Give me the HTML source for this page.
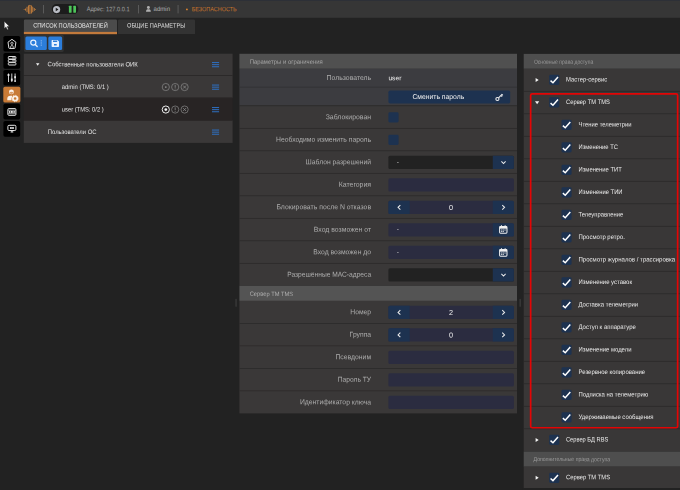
<!DOCTYPE html><html><head><meta charset="utf-8"><title>ui</title><style>
html,body{margin:0;padding:0;}
body{width:680px;height:490px;overflow:hidden;background:#222222;font-family:"Liberation Sans",sans-serif;position:relative;color:#ddd;}
#w{position:absolute;left:-6px;top:-6px;width:692px;height:502px;overflow:hidden;filter:blur(0.3px);}
#c{position:absolute;left:6px;top:6px;width:680px;height:490px;}
.a{position:absolute;}
.t{position:absolute;left:0;top:0;white-space:nowrap;line-height:1;transform-origin:0 0;}
.tr{position:absolute;white-space:nowrap;line-height:1;text-align:right;transform-origin:right center;}
.tc{position:absolute;white-space:nowrap;line-height:1;text-align:center;transform-origin:center center;}
svg{position:absolute;overflow:visible;}
</style></head><body><div id="w"><div id="c">
<svg style="left:0;top:0" width="680" height="490"><rect x="-6.00" y="-6.00" width="692.00" height="23.80" fill="#363636"/><rect x="-6.00" y="-6.00" width="692.00" height="6.80" fill="#2c3038"/><rect x="23.70" y="8.90" width="0.85" height="1.00" rx="0.42" fill="#d5873c"/><rect x="25.20" y="8.25" width="0.80" height="2.40" rx="0.40" fill="#e08c3c"/><rect x="26.64" y="6.55" width="0.80" height="5.80" rx="0.40" fill="#e08c3c"/><rect x="28.08" y="5.10" width="0.80" height="8.70" rx="0.40" fill="#e08c3c"/><rect x="29.52" y="4.85" width="0.80" height="9.20" rx="0.40" fill="#e08c3c"/><rect x="30.96" y="5.30" width="0.80" height="8.30" rx="0.40" fill="#e08c3c"/><rect x="32.40" y="6.55" width="0.80" height="5.80" rx="0.40" fill="#e08c3c"/><rect x="33.84" y="8.00" width="0.80" height="2.90" rx="0.40" fill="#e08c3c"/><rect x="35.20" y="8.90" width="0.85" height="1.00" rx="0.42" fill="#d5873c"/><rect x="43.20" y="5.00" width="0.70" height="8.40" fill="#6a6a6a"/><rect x="51.70" y="4.10" width="26.70" height="10.00" rx="5.00" fill="#1c1c1c"/></svg>
<svg style="left:53.2px;top:5.8px" width="7.2" height="7.2" viewBox="0 0 10 10"><circle cx="5" cy="5" r="5" fill="#b9bcc4"/><path d="M3.8 2.6 L7.6 5 L3.8 7.4 Z" fill="#1b1b1b"/></svg>
<svg style="left:0;top:0" width="680" height="490"><rect x="68.90" y="5.80" width="2.70" height="6.90" rx="0.40" fill="#4dc45a"/><rect x="73.30" y="5.80" width="2.70" height="6.90" rx="0.40" fill="#4dc45a"/></svg>
<div class="t" style="font-size:6.39px;color:#a2a2a2;transform:matrix(0.8886,0.001,0,1,86.70,6.11);">Адрес: 127.0.0.1</div>
<svg style="left:0;top:0" width="680" height="490"><rect x="138.00" y="5.00" width="0.70" height="8.40" fill="#6a6a6a"/></svg>
<svg style="left:145.6px;top:6.2px" width="4.8" height="5.8" viewBox="0 0 10 12"><circle cx="5" cy="3.2" r="3" fill="#b0b0b0"/><path d="M0 12 C0 7.5 2 6.5 5 6.5 C8 6.5 10 7.5 10 12 Z" fill="#b0b0b0"/></svg>
<div class="t" style="font-size:6.39px;color:#b0b0b0;transform:matrix(0.9554,0.001,0,1,153.50,6.11);">admin</div>
<svg style="left:0;top:0" width="680" height="490"><rect x="177.70" y="5.00" width="0.70" height="8.40" fill="#6a6a6a"/></svg>
<svg style="left:0;top:0" width="680" height="490"><circle cx="186.9" cy="9.4" r="0.95" fill="#d9822f"/></svg>
<div class="t" style="font-size:6.28px;color:#c9742c;transform:matrix(0.8724,0.001,0,1,191.70,6.16);">БЕЗОПАСНОСТЬ</div>
<svg style="left:4.2px;top:21.2px" width="6" height="9.5" viewBox="0 0 12 19"><path d="M0.5 0.5 L0.5 15 L4 11.8 L6.4 17.6 L8.8 16.6 L6.4 11 L11 11 Z" fill="#f2f2f2" stroke="#111" stroke-width="0.8"/></svg>
<svg style="left:0;top:0" width="680" height="490"><rect x="3.40" y="35.90" width="16.80" height="15.65" rx="1.70" fill="#000000"/><rect x="3.40" y="53.00" width="16.80" height="15.65" rx="1.70" fill="#000000"/><rect x="3.40" y="69.90" width="16.80" height="15.65" rx="1.70" fill="#000000"/><rect x="3.30" y="86.70" width="17.10" height="15.90" rx="1.70" fill="#c87a36"/><rect x="3.40" y="103.80" width="16.80" height="15.65" rx="1.70" fill="#000000"/><rect x="3.40" y="121.00" width="16.80" height="15.65" rx="1.70" fill="#000000"/></svg>
<svg style="left:0;top:0" width="680" height="490"><path d="M11.95 39.3 L15.9 42.2 L15.0 48.0 Q14.9 48.5 14.4 48.5 L9.5 48.5 Q9.0 48.5 8.9 48.0 L8.0 42.2 Z" fill="none" stroke="#e6e6e6" stroke-width="0.95" stroke-linejoin="round"/><circle cx="11.95" cy="43.3" r="1.15" fill="none" stroke="#e6e6e6" stroke-width="0.8"/><path d="M10.7 48.2 V46.4 Q10.7 45.6 11.95 45.6 Q13.2 45.6 13.2 46.4 V48.2" fill="none" stroke="#e6e6e6" stroke-width="0.8"/></svg>
<svg style="left:0;top:0" width="680" height="490"><g fill="none" stroke="#e6e6e6" stroke-width="0.95"><rect x="8.3" y="56.5" width="7.6" height="2.5" rx="0.7"/><rect x="8.3" y="59.5" width="7.6" height="2.6" rx="0.7"/><rect x="8.3" y="62.6" width="7.6" height="2.4" rx="0.7"/></g><path d="M12.2 57.8 H15.4 M12.2 60.8 H15.4" stroke="#e6e6e6" stroke-width="1.0" opacity="0.75"/></svg>
<svg style="left:0;top:0" width="680" height="490"><path d="M8.5 73.5 V82 M11.8 73.5 V82 M15.1 73.5 V82" stroke="#e6e6e6" stroke-width="0.9" fill="none"/><rect x="7.6" y="74.0" width="1.8" height="2.0" fill="#e6e6e6"/><rect x="10.9" y="78.6" width="1.8" height="2.3" fill="#e6e6e6"/><rect x="14.2" y="76.2" width="1.8" height="2.0" fill="#e6e6e6"/><rect x="14.4" y="80.3" width="1.4" height="1.5" fill="#e6e6e6"/></svg>
<svg style="left:0;top:0" width="680" height="490"><circle cx="11.4" cy="91.9" r="2.45" fill="#fbf1e8"/><path d="M9.5 92.3 Q11.4 91.2 13.3 92.3 Q13.1 94.1 11.4 94.1 Q9.7 94.1 9.5 92.3 Z" fill="#d89a66"/><path d="M7.3 100.2 V98.6 Q7.3 95.9 10.4 95.7 L12.2 95.7 Q12.0 97.2 11.6 98.0 Q11.3 99.0 11.5 100.2 Z" fill="#fbf1e8"/><circle cx="15.1" cy="98.5" r="2.2" fill="none" stroke="#fbf1e8" stroke-width="1.7"/><circle cx="15.1" cy="98.5" r="3.2" fill="none" stroke="#fbf1e8" stroke-width="0.8" stroke-dasharray="1.1 1.4"/></svg>
<svg style="left:0;top:0" width="680" height="490"><rect x="7.9" y="108.6" width="8.0" height="6.7" rx="0.9" fill="none" stroke="#e6e6e6" stroke-width="1.0"/><path d="M8.3 110.2 H15.5 M8.3 113.7 H15.5" stroke="#e6e6e6" stroke-width="0.7"/><rect x="9.0" y="111.0" width="5.8" height="1.9" fill="#e6e6e6"/><rect x="9.9" y="111.45" width="1.1" height="1.0" fill="#000"/><rect x="12.6" y="111.45" width="1.1" height="1.0" fill="#000"/></svg>
<svg style="left:0;top:0" width="680" height="490"><rect x="7.9" y="125.3" width="8.0" height="5.2" rx="1.1" fill="none" stroke="#e6e6e6" stroke-width="1.0"/><rect x="10.1" y="127.0" width="3.7" height="2.0" rx="0.3" fill="#e6e6e6"/><rect x="11.5" y="127.5" width="0.9" height="1.0" fill="#000"/><path d="M10.6 132.0 H13.3 M11.95 130.6 V132" stroke="#e6e6e6" stroke-width="1.0"/></svg>
<svg style="left:0;top:0" width="680" height="490"><path d="M25.10 19.50 H115.80 A1.20 1.20 0 0 1 117.00 20.70 V34.10 A0.00 0.00 0 0 1 117.00 34.10 H23.90 A0.00 0.00 0 0 1 23.90 34.10 V20.70 A1.20 1.20 0 0 1 25.10 19.50 Z" fill="#4b4b4b"/><rect x="23.90" y="31.90" width="93.10" height="2.30" fill="#c27a3c"/></svg>
<div class="t" style="font-size:6.39px;color:#e4e4e4;transform:matrix(0.8854,0.001,0,1,33.20,22.61);">СПИСОК ПОЛЬЗОВАТЕЛЕЙ</div>
<svg style="left:0;top:0" width="680" height="490"><path d="M119.20 19.50 H193.80 A1.20 1.20 0 0 1 195.00 20.70 V34.10 A0.00 0.00 0 0 1 195.00 34.10 H118.00 A0.00 0.00 0 0 1 118.00 34.10 V20.70 A1.20 1.20 0 0 1 119.20 19.50 Z" fill="#333333"/></svg>
<div class="t" style="font-size:6.39px;color:#dcdcdc;transform:matrix(0.8833,0.001,0,1,127.00,22.61);">ОБЩИЕ ПАРАМЕТРЫ</div>
<svg style="left:0;top:0" width="680" height="490"><rect x="24.00" y="34.80" width="39.70" height="17.30" rx="1.50" fill="#313131"/><rect x="25.40" y="36.60" width="21.40" height="13.40" rx="1.50" fill="#2b7ddb"/><rect x="48.30" y="36.60" width="13.80" height="13.40" rx="1.50" fill="#2b7ddb"/></svg>
<svg style="left:0;top:0" width="680" height="490"><circle cx="33.3" cy="42.6" r="2.55" fill="none" stroke="#e8f1ff" stroke-width="1.2"/><path d="M35.2 44.5 L37.2 46.5" stroke="#e8f1ff" stroke-width="1.3" stroke-linecap="round"/></svg>
<svg style="left:0;top:0" width="680" height="490"><rect x="40.75" y="40.30" width="1.00" height="1.05" fill="#a3c7f5"/><rect x="40.75" y="42.45" width="1.00" height="1.05" fill="#a3c7f5"/><rect x="40.75" y="44.60" width="1.00" height="1.05" fill="#a3c7f5"/></svg>
<svg style="left:0;top:0" width="680" height="490"><path fill-rule="evenodd" fill="#e8f1ff" d="M52.3 39.9 H57.4 L59 41.5 V46.3 Q59 47 58.3 47 H52.3 Q51.6 47 51.6 46.3 V40.6 Q51.6 39.9 52.3 39.9 Z M53 40.5 V42 H57.2 V40.5 Z M54 44 V45.5 H56.7 V44 Z"/></svg>
<svg style="left:0;top:0" width="680" height="490"><rect x="23.80" y="53.70" width="208.80" height="21.70" fill="#3a3838"/><rect x="23.80" y="75.40" width="208.80" height="22.50" fill="#3a3838"/><rect x="23.80" y="97.90" width="208.80" height="22.50" fill="#282424"/><rect x="23.80" y="120.40" width="208.80" height="22.50" fill="#3a3838"/><rect x="23.80" y="75.00" width="208.80" height="0.80" fill="#2b2929"/><rect x="23.80" y="97.50" width="208.80" height="0.80" fill="#2b2929"/><rect x="23.80" y="120.00" width="208.80" height="0.80" fill="#2b2929"/></svg>
<svg style="left:0;top:0" width="680" height="490"><path d="M35.98 63.22 L39.42 63.22 L37.70 65.76 Z" fill="#f4f4f4"/></svg>
<div class="t" style="font-size:6.39px;color:#e2e2e2;transform:matrix(0.9286,0.001,0,1,47.60,61.36);">Собственные пользователи ОИК</div>
<div class="t" style="font-size:6.39px;color:#e2e2e2;transform:matrix(0.9213,0.001,0,1,61.80,83.96);">admin (TMS: 0/1 )</div>
<div class="t" style="font-size:6.39px;color:#e2e2e2;transform:matrix(0.9096,0.001,0,1,61.80,106.46);">user (TMS: 0/2 )</div>
<div class="t" style="font-size:6.39px;color:#e2e2e2;transform:matrix(0.9197,0.001,0,1,47.80,128.96);">Пользователи ОС</div>
<svg style="left:0;top:0" width="680" height="490"><rect x="212.00" y="62.05" width="7.10" height="1.00" fill="#2e6fc0"/><rect x="212.00" y="64.15" width="7.10" height="1.00" fill="#2e6fc0"/><rect x="212.00" y="66.25" width="7.10" height="1.00" fill="#2e6fc0"/><rect x="212.00" y="84.55" width="7.10" height="1.00" fill="#2e6fc0"/><rect x="212.00" y="86.65" width="7.10" height="1.00" fill="#2e6fc0"/><rect x="212.00" y="88.75" width="7.10" height="1.00" fill="#2e6fc0"/><rect x="212.00" y="107.05" width="7.10" height="1.00" fill="#2e6fc0"/><rect x="212.00" y="109.15" width="7.10" height="1.00" fill="#2e6fc0"/><rect x="212.00" y="111.25" width="7.10" height="1.00" fill="#2e6fc0"/><rect x="212.00" y="129.55" width="7.10" height="1.00" fill="#2e6fc0"/><rect x="212.00" y="131.65" width="7.10" height="1.00" fill="#2e6fc0"/><rect x="212.00" y="133.75" width="7.10" height="1.00" fill="#2e6fc0"/></svg>
<svg style="left:0;top:0" width="680" height="490"><circle cx="165.8" cy="87.05000000000001" r="3.6" fill="none" stroke="#8a8a8a" stroke-width="0.7"/><circle cx="165.8" cy="87.05000000000001" r="0.9" fill="#8a8a8a"/><circle cx="175.2" cy="87.05000000000001" r="3.6" fill="none" stroke="#8a8a8a" stroke-width="0.7"/><path d="M175.2 84.85000000000001 V87.75000000000001 M175.2 88.55000000000001 V89.35000000000001" stroke="#8a8a8a" stroke-width="0.8"/><circle cx="184.6" cy="87.05000000000001" r="3.6" fill="none" stroke="#8a8a8a" stroke-width="0.7"/><path d="M183.1 85.55000000000001 L186.1 88.55000000000001 M186.1 85.55000000000001 L183.1 88.55000000000001" stroke="#8a8a8a" stroke-width="0.8"/></svg>
<svg style="left:0;top:0" width="680" height="490"><circle cx="165.8" cy="109.55000000000001" r="3.6" fill="none" stroke="#f4f4f4" stroke-width="0.95"/><circle cx="165.8" cy="109.55000000000001" r="1.35" fill="#f4f4f4"/><circle cx="175.2" cy="109.55000000000001" r="3.6" fill="none" stroke="#8a8a8a" stroke-width="0.7"/><path d="M175.2 107.35000000000001 V110.25000000000001 M175.2 111.05000000000001 V111.85000000000001" stroke="#8a8a8a" stroke-width="0.8"/><circle cx="184.6" cy="109.55000000000001" r="3.6" fill="none" stroke="#8a8a8a" stroke-width="0.7"/><path d="M183.1 108.05000000000001 L186.1 111.05000000000001 M186.1 108.05000000000001 L183.1 111.05000000000001" stroke="#8a8a8a" stroke-width="0.8"/></svg>
<svg style="left:0;top:0" width="680" height="490"><rect x="235.40" y="298.80" width="1.30" height="8.00" rx="0.60" fill="#3b3b3b"/><rect x="519.50" y="298.80" width="1.30" height="8.00" rx="0.60" fill="#3b3b3b"/><rect x="239.40" y="53.80" width="277.60" height="15.00" fill="#505050"/></svg>
<div class="t" style="font-size:6.07px;color:#a6a6a6;transform:matrix(0.9787,0.001,0,1,249.70,58.77);">Параметры и ограничения</div>
<svg style="left:0;top:0" width="680" height="490"><rect x="239.40" y="68.80" width="277.60" height="18.30" fill="#3c3c40"/><rect x="239.40" y="87.10" width="277.60" height="18.50" fill="#3c3c40"/><rect x="239.40" y="86.70" width="277.60" height="0.80" fill="#323236"/></svg>
<div class="t" style="font-size:7.14px;color:#adadad;transform:matrix(0.9625,0.001,0,1,326.60,75.03);">Пользователь</div>
<div class="t" style="font-size:6.6px;color:#f2f2f2;transform:matrix(1.0134,0.001,0,1,388.40,75.20);">user</div>
<svg style="left:0;top:0" width="680" height="490"><rect x="388.40" y="90.40" width="121.80" height="13.10" rx="1.80" fill="#1d3250"/></svg>
<div class="t" style="font-size:7.03px;color:#f0f0f0;transform:matrix(0.9679,0.001,0,1,412.40,92.98);">Сменить пароль</div>
<svg style="left:495.4px;top:92.6px" width="8.4" height="8.4" viewBox="0 0 16 16"><circle cx="4.6" cy="11.4" r="3" fill="none" stroke="#f0f0f0" stroke-width="2"/><path d="M6.8 9.2 L13.8 2.2 M11.4 4.6 L13.6 6.8 M13.2 2.8 L15 4.6" stroke="#f0f0f0" stroke-width="2" fill="none"/></svg>
<svg style="left:0;top:0" width="680" height="490"><rect x="239.40" y="105.85" width="277.60" height="22.50" fill="#3a3838"/><rect x="239.40" y="105.45" width="277.60" height="0.80" fill="#2e2c2c"/></svg>
<div class="t" style="font-size:7.14px;color:#adadad;transform:matrix(0.9689,0.001,0,1,325.70,114.28);">Заблокирован</div>
<svg style="left:0;top:0" width="680" height="490"><rect x="239.40" y="128.35" width="277.60" height="22.50" fill="#3a3838"/><rect x="239.40" y="127.95" width="277.60" height="0.80" fill="#2e2c2c"/></svg>
<div class="t" style="font-size:7.14px;color:#adadad;transform:matrix(0.9546,0.001,0,1,276.00,136.78);">Необходимо изменить пароль</div>
<svg style="left:0;top:0" width="680" height="490"><rect x="239.40" y="150.85" width="277.60" height="22.50" fill="#3a3838"/><rect x="239.40" y="150.45" width="277.60" height="0.80" fill="#2e2c2c"/></svg>
<div class="t" style="font-size:7.14px;color:#adadad;transform:matrix(0.9495,0.001,0,1,305.60,159.28);">Шаблон разрешений</div>
<svg style="left:0;top:0" width="680" height="490"><rect x="239.40" y="173.35" width="277.60" height="22.50" fill="#3a3838"/><rect x="239.40" y="172.95" width="277.60" height="0.80" fill="#2e2c2c"/></svg>
<div class="t" style="font-size:7.14px;color:#adadad;transform:matrix(0.9726,0.001,0,1,338.70,181.78);">Категория</div>
<svg style="left:0;top:0" width="680" height="490"><rect x="239.40" y="195.85" width="277.60" height="22.50" fill="#3a3838"/><rect x="239.40" y="195.45" width="277.60" height="0.80" fill="#2e2c2c"/></svg>
<div class="t" style="font-size:7.14px;color:#adadad;transform:matrix(0.9657,0.001,0,1,276.40,204.28);">Блокировать после N отказов</div>
<svg style="left:0;top:0" width="680" height="490"><rect x="239.40" y="218.35" width="277.60" height="22.50" fill="#3a3838"/><rect x="239.40" y="217.95" width="277.60" height="0.80" fill="#2e2c2c"/></svg>
<div class="t" style="font-size:7.14px;color:#adadad;transform:matrix(0.9638,0.001,0,1,313.80,226.78);">Вход возможен от</div>
<svg style="left:0;top:0" width="680" height="490"><rect x="239.40" y="240.85" width="277.60" height="22.50" fill="#3a3838"/><rect x="239.40" y="240.45" width="277.60" height="0.80" fill="#2e2c2c"/></svg>
<div class="t" style="font-size:7.14px;color:#adadad;transform:matrix(0.9570,0.001,0,1,313.20,249.28);">Вход возможен до</div>
<svg style="left:0;top:0" width="680" height="490"><rect x="239.40" y="263.35" width="277.60" height="22.50" fill="#3a3838"/><rect x="239.40" y="262.95" width="277.60" height="0.80" fill="#2e2c2c"/></svg>
<div class="t" style="font-size:7.14px;color:#adadad;transform:matrix(0.9340,0.001,0,1,287.20,271.78);">Разрешённые МАС-адреса</div>
<svg style="left:0;top:0" width="680" height="490"><rect x="388.40" y="112.25" width="10.20" height="10.20" rx="1.40" fill="#1d3250"/><rect x="388.40" y="134.75" width="10.20" height="10.20" rx="1.40" fill="#1d3250"/><rect x="388.40" y="155.65" width="125.50" height="13.40" rx="1.50" fill="#222222"/><path d="M492.80 155.65 H512.40 A1.50 1.50 0 0 1 513.90 157.15 V167.55 A1.50 1.50 0 0 1 512.40 169.05 H492.80 A0.00 0.00 0 0 1 492.80 169.05 V155.65 A0.00 0.00 0 0 1 492.80 155.65 Z" fill="#1d3250"/></svg>
<svg style="left:0;top:0" width="680" height="490"><path d="M501.40 161.45 L503.50 163.55 L505.60 161.45" fill="none" stroke="#ececec" stroke-width="1.05"/></svg>
<div class="t" style="font-size:6.6px;color:#d0d0d0;transform:matrix(1.0000,0.001,0,1,396.80,159.05);">-</div>
<svg style="left:0;top:0" width="680" height="490"><rect x="388.40" y="178.15" width="125.50" height="13.40" rx="1.50" fill="#2b2c40"/><rect x="388.40" y="200.65" width="125.50" height="13.40" rx="1.50" fill="#2b2c40"/><path d="M389.90 200.65 H409.70 A0.00 0.00 0 0 1 409.70 200.65 V214.05 A0.00 0.00 0 0 1 409.70 214.05 H389.90 A1.50 1.50 0 0 1 388.40 212.55 V202.15 A1.50 1.50 0 0 1 389.90 200.65 Z" fill="#1d3250"/><path d="M492.80 200.65 H512.40 A1.50 1.50 0 0 1 513.90 202.15 V212.55 A1.50 1.50 0 0 1 512.40 214.05 H492.80 A0.00 0.00 0 0 1 492.80 214.05 V200.65 A0.00 0.00 0 0 1 492.80 200.65 Z" fill="#1d3250"/></svg>
<svg style="left:0;top:0" width="680" height="490"><path d="M400.35 205.10 L398.05 207.35 L400.35 209.60" fill="none" stroke="#ececec" stroke-width="1.05"/></svg>
<svg style="left:0;top:0" width="680" height="490"><path d="M502.25 205.10 L504.55 207.35 L502.25 209.60" fill="none" stroke="#ececec" stroke-width="1.05"/></svg>
<div class="t" style="font-size:7.24px;color:#f0f0f0;transform:matrix(1.0000,0.001,0,1,449.08,203.93);">0</div>
<svg style="left:0;top:0" width="680" height="490"><rect x="388.40" y="223.15" width="125.50" height="13.40" rx="1.50" fill="#2b2c40"/><path d="M492.80 223.15 H512.40 A1.50 1.50 0 0 1 513.90 224.65 V235.05 A1.50 1.50 0 0 1 512.40 236.55 H492.80 A0.00 0.00 0 0 1 492.80 236.55 V223.15 A0.00 0.00 0 0 1 492.80 223.15 Z" fill="#1d3250"/></svg>
<svg style="left:499.4px;top:225.45px" width="8.6" height="8.8" viewBox="0 0 14 14"><rect x="1" y="2.4" width="12" height="10.8" rx="1.4" fill="none" stroke="#f0f0f0" stroke-width="1.7"/><rect x="1" y="2.4" width="12" height="3.4" fill="#f0f0f0"/><path d="M4 0.4 V3 M10 0.4 V3" stroke="#f0f0f0" stroke-width="1.7"/><path d="M3.2 8 H5.4 M6 8 H8.1 M8.7 8 H10.9 M3.2 10.6 H5.4 M6 10.6 H8.1" stroke="#f0f0f0" stroke-width="1.4"/></svg>
<div class="t" style="font-size:6.6px;color:#d0d0d0;transform:matrix(1.0000,0.001,0,1,396.80,226.55);">-</div>
<svg style="left:0;top:0" width="680" height="490"><rect x="388.40" y="245.65" width="125.50" height="13.40" rx="1.50" fill="#2b2c40"/><path d="M492.80 245.65 H512.40 A1.50 1.50 0 0 1 513.90 247.15 V257.55 A1.50 1.50 0 0 1 512.40 259.05 H492.80 A0.00 0.00 0 0 1 492.80 259.05 V245.65 A0.00 0.00 0 0 1 492.80 245.65 Z" fill="#1d3250"/></svg>
<svg style="left:499.4px;top:247.95px" width="8.6" height="8.8" viewBox="0 0 14 14"><rect x="1" y="2.4" width="12" height="10.8" rx="1.4" fill="none" stroke="#f0f0f0" stroke-width="1.7"/><rect x="1" y="2.4" width="12" height="3.4" fill="#f0f0f0"/><path d="M4 0.4 V3 M10 0.4 V3" stroke="#f0f0f0" stroke-width="1.7"/><path d="M3.2 8 H5.4 M6 8 H8.1 M8.7 8 H10.9 M3.2 10.6 H5.4 M6 10.6 H8.1" stroke="#f0f0f0" stroke-width="1.4"/></svg>
<div class="t" style="font-size:6.6px;color:#d0d0d0;transform:matrix(1.0000,0.001,0,1,396.80,249.05);">-</div>
<svg style="left:0;top:0" width="680" height="490"><rect x="388.40" y="268.15" width="125.50" height="13.40" rx="1.50" fill="#222222"/><path d="M492.80 268.15 H512.40 A1.50 1.50 0 0 1 513.90 269.65 V280.05 A1.50 1.50 0 0 1 512.40 281.55 H492.80 A0.00 0.00 0 0 1 492.80 281.55 V268.15 A0.00 0.00 0 0 1 492.80 268.15 Z" fill="#1d3250"/></svg>
<svg style="left:0;top:0" width="680" height="490"><path d="M501.40 273.95 L503.50 276.05 L505.60 273.95" fill="none" stroke="#ececec" stroke-width="1.05"/></svg>
<svg style="left:0;top:0" width="680" height="490"><rect x="239.40" y="285.85" width="277.60" height="15.05" fill="#545454"/></svg>
<div class="t" style="font-size:6.07px;color:#b0b0b0;transform:matrix(0.9469,0.001,0,1,249.70,290.86);">Сервер ТМ TMS</div>
<svg style="left:0;top:0" width="680" height="490"><rect x="239.40" y="300.90" width="277.60" height="22.50" fill="#3a3838"/></svg>
<div class="t" style="font-size:7.14px;color:#adadad;transform:matrix(0.9481,0.001,0,1,350.30,309.33);">Номер</div>
<svg style="left:0;top:0" width="680" height="490"><rect x="239.40" y="323.40" width="277.60" height="22.50" fill="#3a3838"/><rect x="239.40" y="323.00" width="277.60" height="0.80" fill="#2e2c2c"/></svg>
<div class="t" style="font-size:7.14px;color:#adadad;transform:matrix(0.9516,0.001,0,1,349.60,331.83);">Группа</div>
<svg style="left:0;top:0" width="680" height="490"><rect x="239.40" y="345.90" width="277.60" height="22.50" fill="#3a3838"/><rect x="239.40" y="345.50" width="277.60" height="0.80" fill="#2e2c2c"/></svg>
<div class="t" style="font-size:7.14px;color:#adadad;transform:matrix(0.9572,0.001,0,1,335.40,354.33);">Псевдоним</div>
<svg style="left:0;top:0" width="680" height="490"><rect x="239.40" y="368.40" width="277.60" height="22.50" fill="#3a3838"/><rect x="239.40" y="368.00" width="277.60" height="0.80" fill="#2e2c2c"/></svg>
<div class="t" style="font-size:7.14px;color:#adadad;transform:matrix(0.9356,0.001,0,1,337.80,376.83);">Пароль ТУ</div>
<svg style="left:0;top:0" width="680" height="490"><rect x="239.40" y="390.90" width="277.60" height="22.50" fill="#3a3838"/><rect x="239.40" y="390.50" width="277.60" height="0.80" fill="#2e2c2c"/></svg>
<div class="t" style="font-size:7.14px;color:#adadad;transform:matrix(0.9537,0.001,0,1,299.90,399.33);">Идентификатор ключа</div>
<svg style="left:0;top:0" width="680" height="490"><rect x="388.40" y="305.70" width="125.50" height="13.40" rx="1.50" fill="#2b2c40"/><path d="M389.90 305.70 H409.70 A0.00 0.00 0 0 1 409.70 305.70 V319.10 A0.00 0.00 0 0 1 409.70 319.10 H389.90 A1.50 1.50 0 0 1 388.40 317.60 V307.20 A1.50 1.50 0 0 1 389.90 305.70 Z" fill="#1d3250"/><path d="M492.80 305.70 H512.40 A1.50 1.50 0 0 1 513.90 307.20 V317.60 A1.50 1.50 0 0 1 512.40 319.10 H492.80 A0.00 0.00 0 0 1 492.80 319.10 V305.70 A0.00 0.00 0 0 1 492.80 305.70 Z" fill="#1d3250"/></svg>
<svg style="left:0;top:0" width="680" height="490"><path d="M400.35 310.15 L398.05 312.40 L400.35 314.65" fill="none" stroke="#ececec" stroke-width="1.05"/></svg>
<svg style="left:0;top:0" width="680" height="490"><path d="M502.25 310.15 L504.55 312.40 L502.25 314.65" fill="none" stroke="#ececec" stroke-width="1.05"/></svg>
<div class="t" style="font-size:7.24px;color:#f0f0f0;transform:matrix(1.0000,0.001,0,1,449.08,308.98);">2</div>
<svg style="left:0;top:0" width="680" height="490"><rect x="388.40" y="328.20" width="125.50" height="13.40" rx="1.50" fill="#2b2c40"/><path d="M389.90 328.20 H409.70 A0.00 0.00 0 0 1 409.70 328.20 V341.60 A0.00 0.00 0 0 1 409.70 341.60 H389.90 A1.50 1.50 0 0 1 388.40 340.10 V329.70 A1.50 1.50 0 0 1 389.90 328.20 Z" fill="#1d3250"/><path d="M492.80 328.20 H512.40 A1.50 1.50 0 0 1 513.90 329.70 V340.10 A1.50 1.50 0 0 1 512.40 341.60 H492.80 A0.00 0.00 0 0 1 492.80 341.60 V328.20 A0.00 0.00 0 0 1 492.80 328.20 Z" fill="#1d3250"/></svg>
<svg style="left:0;top:0" width="680" height="490"><path d="M400.35 332.65 L398.05 334.90 L400.35 337.15" fill="none" stroke="#ececec" stroke-width="1.05"/></svg>
<svg style="left:0;top:0" width="680" height="490"><path d="M502.25 332.65 L504.55 334.90 L502.25 337.15" fill="none" stroke="#ececec" stroke-width="1.05"/></svg>
<div class="t" style="font-size:7.24px;color:#f0f0f0;transform:matrix(1.0000,0.001,0,1,449.08,331.48);">0</div>
<svg style="left:0;top:0" width="680" height="490"><rect x="388.40" y="350.70" width="125.50" height="13.40" rx="1.50" fill="#2b2c40"/><rect x="388.40" y="373.20" width="125.50" height="13.40" rx="1.50" fill="#2b2c40"/><rect x="388.40" y="395.70" width="125.50" height="13.40" rx="1.50" fill="#2b2c40"/><rect x="523.70" y="53.90" width="162.30" height="14.90" fill="#4e4e4e"/></svg>
<div class="t" style="font-size:5.86px;color:#9c9c9c;transform:matrix(0.8622,0.001,0,1,533.90,59.77);">Основные права доступа</div>
<svg style="left:0;top:0" width="680" height="490"><rect x="523.70" y="68.80" width="162.30" height="22.50" fill="#393737"/></svg>
<svg style="left:0;top:0" width="680" height="490"><path d="M535.65 77.90 L538.70 79.90 L535.65 81.90 Z" fill="#f4f4f4"/></svg>
<svg style="left:0;top:0" width="680" height="490"><rect x="549.20" y="74.80" width="10.10" height="10.20" rx="1.40" fill="#1d3250"/></svg>
<svg style="left:0;top:0" width="680" height="490"><path d="M550.55 80.60 L552.95 82.70 L558.00 77.10" fill="none" stroke="#ffffff" stroke-width="1.5"/></svg>
<div class="t" style="font-size:6.39px;color:#eaeaea;transform:matrix(0.9217,0.001,0,1,566.00,76.41);">Мастер-сервис</div>
<svg style="left:0;top:0" width="680" height="490"><rect x="523.70" y="91.30" width="162.30" height="22.50" fill="#393737"/><rect x="523.70" y="90.90" width="162.30" height="0.80" fill="#2d2b2b"/></svg>
<svg style="left:0;top:0" width="680" height="490"><path d="M535.00 101.20 L539.20 101.20 L537.10 104.30 Z" fill="#f4f4f4"/></svg>
<svg style="left:0;top:0" width="680" height="490"><rect x="549.20" y="97.30" width="10.10" height="10.20" rx="1.40" fill="#1d3250"/></svg>
<svg style="left:0;top:0" width="680" height="490"><path d="M550.55 103.10 L552.95 105.20 L558.00 99.60" fill="none" stroke="#ffffff" stroke-width="1.5"/></svg>
<div class="t" style="font-size:6.39px;color:#eaeaea;transform:matrix(0.9087,0.001,0,1,566.00,98.91);">Сервер ТМ TMS</div>
<svg style="left:0;top:0" width="680" height="490"><rect x="523.70" y="113.80" width="162.30" height="22.50" fill="#393737"/><rect x="523.70" y="113.40" width="162.30" height="0.80" fill="#2d2b2b"/><rect x="561.50" y="119.80" width="10.10" height="10.20" rx="1.40" fill="#1d3250"/></svg>
<svg style="left:0;top:0" width="680" height="490"><path d="M562.85 125.60 L565.25 127.70 L570.30 122.10" fill="none" stroke="#ffffff" stroke-width="1.5"/></svg>
<div class="t" style="font-size:6.39px;color:#eaeaea;transform:matrix(0.9170,0.001,0,1,578.50,121.41);">Чтение телеметрии</div>
<svg style="left:0;top:0" width="680" height="490"><rect x="523.70" y="136.30" width="162.30" height="22.50" fill="#393737"/><rect x="523.70" y="135.90" width="162.30" height="0.80" fill="#2d2b2b"/><rect x="561.50" y="142.30" width="10.10" height="10.20" rx="1.40" fill="#1d3250"/></svg>
<svg style="left:0;top:0" width="680" height="490"><path d="M562.85 148.10 L565.25 150.20 L570.30 144.60" fill="none" stroke="#ffffff" stroke-width="1.5"/></svg>
<div class="t" style="font-size:6.39px;color:#eaeaea;transform:matrix(0.9077,0.001,0,1,578.50,143.91);">Изменение ТС</div>
<svg style="left:0;top:0" width="680" height="490"><rect x="523.70" y="158.80" width="162.30" height="22.50" fill="#393737"/><rect x="523.70" y="158.40" width="162.30" height="0.80" fill="#2d2b2b"/><rect x="561.50" y="164.80" width="10.10" height="10.20" rx="1.40" fill="#1d3250"/></svg>
<svg style="left:0;top:0" width="680" height="490"><path d="M562.85 170.60 L565.25 172.70 L570.30 167.10" fill="none" stroke="#ffffff" stroke-width="1.5"/></svg>
<div class="t" style="font-size:6.39px;color:#eaeaea;transform:matrix(0.9158,0.001,0,1,578.50,166.41);">Изменение ТИТ</div>
<svg style="left:0;top:0" width="680" height="490"><rect x="523.70" y="181.30" width="162.30" height="22.50" fill="#393737"/><rect x="523.70" y="180.90" width="162.30" height="0.80" fill="#2d2b2b"/><rect x="561.50" y="187.30" width="10.10" height="10.20" rx="1.40" fill="#1d3250"/></svg>
<svg style="left:0;top:0" width="680" height="490"><path d="M562.85 193.10 L565.25 195.20 L570.30 189.60" fill="none" stroke="#ffffff" stroke-width="1.5"/></svg>
<div class="t" style="font-size:6.39px;color:#eaeaea;transform:matrix(0.9193,0.001,0,1,578.50,188.91);">Изменение ТИИ</div>
<svg style="left:0;top:0" width="680" height="490"><rect x="523.70" y="203.80" width="162.30" height="22.50" fill="#393737"/><rect x="523.70" y="203.40" width="162.30" height="0.80" fill="#2d2b2b"/><rect x="561.50" y="209.80" width="10.10" height="10.20" rx="1.40" fill="#1d3250"/></svg>
<svg style="left:0;top:0" width="680" height="490"><path d="M562.85 215.60 L565.25 217.70 L570.30 212.10" fill="none" stroke="#ffffff" stroke-width="1.5"/></svg>
<div class="t" style="font-size:6.39px;color:#eaeaea;transform:matrix(0.9134,0.001,0,1,578.50,211.41);">Телеуправление</div>
<svg style="left:0;top:0" width="680" height="490"><rect x="523.70" y="226.30" width="162.30" height="22.50" fill="#393737"/><rect x="523.70" y="225.90" width="162.30" height="0.80" fill="#2d2b2b"/><rect x="561.50" y="232.30" width="10.10" height="10.20" rx="1.40" fill="#1d3250"/></svg>
<svg style="left:0;top:0" width="680" height="490"><path d="M562.85 238.10 L565.25 240.20 L570.30 234.60" fill="none" stroke="#ffffff" stroke-width="1.5"/></svg>
<div class="t" style="font-size:6.39px;color:#eaeaea;transform:matrix(0.9345,0.001,0,1,578.50,233.91);">Просмотр ретро.</div>
<svg style="left:0;top:0" width="680" height="490"><rect x="523.70" y="248.80" width="162.30" height="22.50" fill="#393737"/><rect x="523.70" y="248.40" width="162.30" height="0.80" fill="#2d2b2b"/><rect x="561.50" y="254.80" width="10.10" height="10.20" rx="1.40" fill="#1d3250"/></svg>
<svg style="left:0;top:0" width="680" height="490"><path d="M562.85 260.60 L565.25 262.70 L570.30 257.10" fill="none" stroke="#ffffff" stroke-width="1.5"/></svg>
<div class="t" style="font-size:6.39px;color:#eaeaea;transform:matrix(0.9481,0.001,0,1,578.50,256.41);">Просмотр журналов / трассировка</div>
<svg style="left:0;top:0" width="680" height="490"><rect x="523.70" y="271.30" width="162.30" height="22.50" fill="#393737"/><rect x="523.70" y="270.90" width="162.30" height="0.80" fill="#2d2b2b"/><rect x="561.50" y="277.30" width="10.10" height="10.20" rx="1.40" fill="#1d3250"/></svg>
<svg style="left:0;top:0" width="680" height="490"><path d="M562.85 283.10 L565.25 285.20 L570.30 279.60" fill="none" stroke="#ffffff" stroke-width="1.5"/></svg>
<div class="t" style="font-size:6.39px;color:#eaeaea;transform:matrix(0.9345,0.001,0,1,578.50,278.91);">Изменение уставок</div>
<svg style="left:0;top:0" width="680" height="490"><rect x="523.70" y="293.80" width="162.30" height="22.50" fill="#393737"/><rect x="523.70" y="293.40" width="162.30" height="0.80" fill="#2d2b2b"/><rect x="561.50" y="299.80" width="10.10" height="10.20" rx="1.40" fill="#1d3250"/></svg>
<svg style="left:0;top:0" width="680" height="490"><path d="M562.85 305.60 L565.25 307.70 L570.30 302.10" fill="none" stroke="#ffffff" stroke-width="1.5"/></svg>
<div class="t" style="font-size:6.39px;color:#eaeaea;transform:matrix(0.9342,0.001,0,1,578.50,301.41);">Доставка телеметрии</div>
<svg style="left:0;top:0" width="680" height="490"><rect x="523.70" y="316.30" width="162.30" height="22.50" fill="#393737"/><rect x="523.70" y="315.90" width="162.30" height="0.80" fill="#2d2b2b"/><rect x="561.50" y="322.30" width="10.10" height="10.20" rx="1.40" fill="#1d3250"/></svg>
<svg style="left:0;top:0" width="680" height="490"><path d="M562.85 328.10 L565.25 330.20 L570.30 324.60" fill="none" stroke="#ffffff" stroke-width="1.5"/></svg>
<div class="t" style="font-size:6.39px;color:#eaeaea;transform:matrix(0.9374,0.001,0,1,578.50,323.91);">Доступ к аппаратуре</div>
<svg style="left:0;top:0" width="680" height="490"><rect x="523.70" y="338.80" width="162.30" height="22.50" fill="#393737"/><rect x="523.70" y="338.40" width="162.30" height="0.80" fill="#2d2b2b"/><rect x="561.50" y="344.80" width="10.10" height="10.20" rx="1.40" fill="#1d3250"/></svg>
<svg style="left:0;top:0" width="680" height="490"><path d="M562.85 350.60 L565.25 352.70 L570.30 347.10" fill="none" stroke="#ffffff" stroke-width="1.5"/></svg>
<div class="t" style="font-size:6.39px;color:#eaeaea;transform:matrix(0.9293,0.001,0,1,578.50,346.41);">Изменение модели</div>
<svg style="left:0;top:0" width="680" height="490"><rect x="523.70" y="361.30" width="162.30" height="22.50" fill="#393737"/><rect x="523.70" y="360.90" width="162.30" height="0.80" fill="#2d2b2b"/><rect x="561.50" y="367.30" width="10.10" height="10.20" rx="1.40" fill="#1d3250"/></svg>
<svg style="left:0;top:0" width="680" height="490"><path d="M562.85 373.10 L565.25 375.20 L570.30 369.60" fill="none" stroke="#ffffff" stroke-width="1.5"/></svg>
<div class="t" style="font-size:6.39px;color:#eaeaea;transform:matrix(0.9368,0.001,0,1,578.50,368.91);">Резервное копирование</div>
<svg style="left:0;top:0" width="680" height="490"><rect x="523.70" y="383.80" width="162.30" height="22.50" fill="#393737"/><rect x="523.70" y="383.40" width="162.30" height="0.80" fill="#2d2b2b"/><rect x="561.50" y="389.80" width="10.10" height="10.20" rx="1.40" fill="#1d3250"/></svg>
<svg style="left:0;top:0" width="680" height="490"><path d="M562.85 395.60 L565.25 397.70 L570.30 392.10" fill="none" stroke="#ffffff" stroke-width="1.5"/></svg>
<div class="t" style="font-size:6.39px;color:#eaeaea;transform:matrix(0.9297,0.001,0,1,578.50,391.41);">Подписка на телеметрию</div>
<svg style="left:0;top:0" width="680" height="490"><rect x="523.70" y="406.30" width="162.30" height="22.50" fill="#393737"/><rect x="523.70" y="405.90" width="162.30" height="0.80" fill="#2d2b2b"/><rect x="561.50" y="412.30" width="10.10" height="10.20" rx="1.40" fill="#1d3250"/></svg>
<svg style="left:0;top:0" width="680" height="490"><path d="M562.85 418.10 L565.25 420.20 L570.30 414.60" fill="none" stroke="#ffffff" stroke-width="1.5"/></svg>
<div class="t" style="font-size:6.39px;color:#eaeaea;transform:matrix(0.9359,0.001,0,1,578.50,413.91);">Удерживаемые сообщения</div>
<svg style="left:0;top:0" width="680" height="490"><rect x="523.70" y="428.80" width="162.30" height="22.50" fill="#393737"/><rect x="523.70" y="428.40" width="162.30" height="0.80" fill="#2d2b2b"/></svg>
<svg style="left:0;top:0" width="680" height="490"><path d="M535.65 437.90 L538.70 439.90 L535.65 441.90 Z" fill="#f4f4f4"/></svg>
<svg style="left:0;top:0" width="680" height="490"><rect x="549.20" y="434.80" width="10.10" height="10.20" rx="1.40" fill="#1d3250"/></svg>
<svg style="left:0;top:0" width="680" height="490"><path d="M550.55 440.60 L552.95 442.70 L558.00 437.10" fill="none" stroke="#ffffff" stroke-width="1.5"/></svg>
<div class="t" style="font-size:6.39px;color:#eaeaea;transform:matrix(0.8949,0.001,0,1,566.00,436.41);">Сервер БД RBS</div>
<svg style="left:0;top:0" width="680" height="490"><rect x="523.70" y="451.50" width="162.30" height="15.20" fill="#4e4e4e"/></svg>
<div class="t" style="font-size:5.86px;color:#9c9c9c;transform:matrix(0.8757,0.001,0,1,533.60,457.07);">Дополнительные права доступа</div>
<svg style="left:0;top:0" width="680" height="490"><rect x="523.70" y="466.70" width="162.30" height="22.50" fill="#393737"/></svg>
<svg style="left:0;top:0" width="680" height="490"><path d="M535.65 475.80 L538.70 477.80 L535.65 479.80 Z" fill="#f4f4f4"/></svg>
<svg style="left:0;top:0" width="680" height="490"><rect x="549.20" y="472.70" width="10.10" height="10.20" rx="1.40" fill="#1d3250"/></svg>
<svg style="left:0;top:0" width="680" height="490"><path d="M550.55 478.50 L552.95 480.60 L558.00 475.00" fill="none" stroke="#ffffff" stroke-width="1.5"/></svg>
<div class="t" style="font-size:6.39px;color:#eaeaea;transform:matrix(0.9128,0.001,0,1,566.00,474.31);">Сервер ТМ TMS</div>
<svg style="left:0;top:0" width="680" height="490"><rect x="522.70" y="488.00" width="163.30" height="8.00" fill="#222222"/></svg>
<svg style="left:0;top:0" width="680" height="490"><rect x="530.65" y="93.95" width="147.0" height="333.8" rx="1.6" fill="none" stroke="#e30505" stroke-width="1.7"/></svg>
</div></div></body></html>
